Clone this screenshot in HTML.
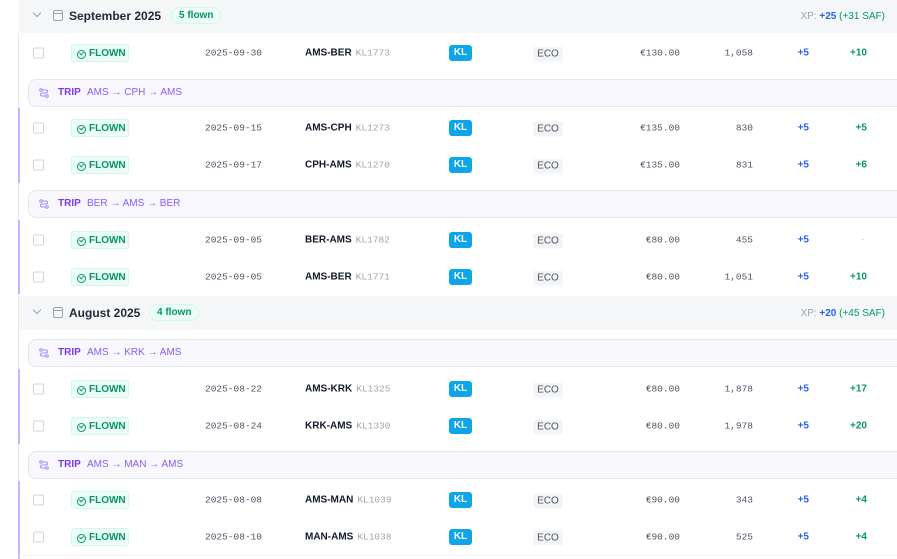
<!DOCTYPE html>
<html><head><meta charset="utf-8"><style>
*{margin:0;padding:0;box-sizing:border-box}
body{width:897px;height:559px;overflow:hidden;background:#fff;font-family:"Liberation Sans",sans-serif;position:relative}
.vl{position:absolute;left:18px;width:1px;background:#e5e7eb}
.pl{position:absolute;left:18px;width:2px;background:#c4b5fd}
.mh{position:absolute;left:19px;right:0;height:34px;background:#f4f6f8}
.mh .chev{position:absolute;left:15px;top:11px;width:6px;height:6px;border-right:1.3px solid #9ca3af;border-bottom:1.3px solid #9ca3af;transform:rotate(45deg)}
.mh .cal{position:absolute;left:34px;top:11px;width:10px;height:11px;border:1.2px solid #9ca3af;border-radius:2px}
.mh .cal:before{content:"";position:absolute;left:0;right:0;top:2px;border-top:1.2px solid #9ca3af}
.mh .t{position:absolute;left:50px;top:10px;font-size:12px;font-weight:bold;color:#1f2937}
.mh .b{position:absolute;top:8px;height:17px;padding:0 7px;border-radius:9px;background:#ecfdf5;border:1px solid #d1fae5;color:#059669;font-size:10px;font-weight:bold;line-height:15px}
.mh .xp{position:absolute;right:12px;top:12px;font-size:10px;color:#9ca3af}
.xp b{color:#2563eb}.xp span{color:#059669}
.tr{position:absolute;left:28px;right:-10px;height:28px;background:#f8f7fd;border:1px solid #e5e7eb;border-radius:8px;font-size:10px;line-height:26px;color:#8b5cf6}
.tr .ic{position:absolute;left:10px;top:8px;width:10px;height:10px}
.tr b{position:absolute;left:29px;color:#7c3aed}
.tr span{position:absolute;left:58px}
.row{position:absolute;left:19px;right:0;height:37px;font-size:10px}
.row>*{position:absolute;top:50%;transform:translateY(-50%)}
.cb{left:14px;width:11px;height:11px;border:1px solid #d1d5db;border-radius:2px;background:#fff}
.fl{left:52px;width:58px;height:18px;background:#ecfdf5;border:1px solid #d1fae5;border-radius:3px;color:#059669;font-weight:bold;font-size:10px;line-height:17px;padding-left:17px}
.fl:before{content:"";position:absolute;left:5px;top:5px;width:7px;height:7px;border:1px solid #059669;border-radius:50%}
.fl:after{content:"";position:absolute;left:8px;top:6px;width:2px;height:3px;border-right:1px solid #059669;border-bottom:1px solid #059669;transform:rotate(45deg)}
.dt{left:186px;font-family:"Liberation Mono",monospace;color:#4b5563;font-size:9.5px}
.rt{left:286px;font-weight:bold;color:#111827}
.rt span{font-weight:normal;color:#9ca3af;font-family:"Liberation Mono",monospace;font-size:9.5px;margin-left:4px}
.kl{left:430px;width:23px;height:16px;background:#0ea5e9;color:#fff;border-radius:3px;font-weight:bold;text-align:center;line-height:16px}
.eco{left:514px;width:30px;height:15px;background:#f3f4f6;color:#4b5563;border-radius:3px;text-align:center;line-height:15px;margin-top:1px}
.pr{right:217px;font-family:"Liberation Mono",monospace;color:#4b5563;font-size:9.5px}
.ds{right:144px;font-family:"Liberation Mono",monospace;color:#4b5563;font-size:9.5px}
.x1{right:88px;color:#2563eb;font-weight:bold}
.x2{right:30px;color:#059669;font-weight:bold}
.sep{position:absolute;left:19px;right:0;border-top:1px solid #f3f4f6}
</style></head><body>
<div class="vl" style="top:33px;height:526px"></div>
<div class="pl" style="top:108px;height:75px"></div>
<div class="pl" style="top:220px;height:74px"></div>
<div class="pl" style="top:369px;height:75px"></div>
<div class="pl" style="top:481px;height:78px"></div>

<div class="mh" style="top:-1px"><i class="chev"></i><i class="cal"></i><span class="t">September 2025</span><span class="b" style="left:152px">5 flown</span><span class="xp">XP: <b>+25</b> <span>(+31 SAF)</span></span></div>

<div class="row" style="top:34px"><i class="cb"></i><span class="fl">FLOWN</span><span class="dt">2025-09-30</span><span class="rt">AMS-BER<span>KL1773</span></span><span class="kl">KL</span><span class="eco">ECO</span><span class="pr">€130.00</span><span class="ds">1,058</span><span class="x1">+5</span><span class="x2">+10</span></div>

<div class="tr" style="top:79px"><svg class="ic" viewBox="0 0 10 10" fill="none" stroke="#a78bfa" stroke-width="1"><circle cx="2" cy="2" r="1.3"/><circle cx="8" cy="8" r="1.3"/><path d="M3.5 2H7a1.5 1.5 0 010 3H3a1.5 1.5 0 000 3h3.5"/></svg><b>TRIP</b><span>AMS → CPH → AMS</span></div>
<div class="row" style="top:109px"><i class="cb"></i><span class="fl">FLOWN</span><span class="dt">2025-09-15</span><span class="rt">AMS-CPH<span>KL1273</span></span><span class="kl">KL</span><span class="eco">ECO</span><span class="pr">€135.00</span><span class="ds">830</span><span class="x1">+5</span><span class="x2">+5</span></div>
<div class="row" style="top:146px"><i class="cb"></i><span class="fl">FLOWN</span><span class="dt">2025-09-17</span><span class="rt">CPH-AMS<span>KL1270</span></span><span class="kl">KL</span><span class="eco">ECO</span><span class="pr">€135.00</span><span class="ds">831</span><span class="x1">+5</span><span class="x2">+6</span></div>

<div class="tr" style="top:190px"><svg class="ic" viewBox="0 0 10 10" fill="none" stroke="#a78bfa" stroke-width="1"><circle cx="2" cy="2" r="1.3"/><circle cx="8" cy="8" r="1.3"/><path d="M3.5 2H7a1.5 1.5 0 010 3H3a1.5 1.5 0 000 3h3.5"/></svg><b>TRIP</b><span>BER → AMS → BER</span></div>
<div class="row" style="top:221px"><i class="cb"></i><span class="fl">FLOWN</span><span class="dt">2025-09-05</span><span class="rt">BER-AMS<span>KL1782</span></span><span class="kl">KL</span><span class="eco">ECO</span><span class="pr">€80.00</span><span class="ds">455</span><span class="x1">+5</span><span class="x2" style="color:#d1d5db;font-weight:normal;right:32px">-</span></div>
<div class="row" style="top:258px"><i class="cb"></i><span class="fl">FLOWN</span><span class="dt">2025-09-05</span><span class="rt">AMS-BER<span>KL1771</span></span><span class="kl">KL</span><span class="eco">ECO</span><span class="pr">€80.00</span><span class="ds">1,051</span><span class="x1">+5</span><span class="x2">+10</span></div>

<div class="mh" style="top:296px"><i class="chev"></i><i class="cal"></i><span class="t">August 2025</span><span class="b" style="left:130px">4 flown</span><span class="xp">XP: <b>+20</b> <span>(+45 SAF)</span></span></div>

<div class="tr" style="top:339px"><svg class="ic" viewBox="0 0 10 10" fill="none" stroke="#a78bfa" stroke-width="1"><circle cx="2" cy="2" r="1.3"/><circle cx="8" cy="8" r="1.3"/><path d="M3.5 2H7a1.5 1.5 0 010 3H3a1.5 1.5 0 000 3h3.5"/></svg><b>TRIP</b><span>AMS → KRK → AMS</span></div>
<div class="row" style="top:370px"><i class="cb"></i><span class="fl">FLOWN</span><span class="dt">2025-08-22</span><span class="rt">AMS-KRK<span>KL1325</span></span><span class="kl">KL</span><span class="eco">ECO</span><span class="pr">€80.00</span><span class="ds">1,878</span><span class="x1">+5</span><span class="x2">+17</span></div>
<div class="row" style="top:407px"><i class="cb"></i><span class="fl">FLOWN</span><span class="dt">2025-08-24</span><span class="rt">KRK-AMS<span>KL1330</span></span><span class="kl">KL</span><span class="eco">ECO</span><span class="pr">€80.00</span><span class="ds">1,978</span><span class="x1">+5</span><span class="x2">+20</span></div>

<div class="tr" style="top:451px"><svg class="ic" viewBox="0 0 10 10" fill="none" stroke="#a78bfa" stroke-width="1"><circle cx="2" cy="2" r="1.3"/><circle cx="8" cy="8" r="1.3"/><path d="M3.5 2H7a1.5 1.5 0 010 3H3a1.5 1.5 0 000 3h3.5"/></svg><b>TRIP</b><span>AMS → MAN → AMS</span></div>
<div class="row" style="top:481px"><i class="cb"></i><span class="fl">FLOWN</span><span class="dt">2025-08-08</span><span class="rt">AMS-MAN<span>KL1039</span></span><span class="kl">KL</span><span class="eco">ECO</span><span class="pr">€90.00</span><span class="ds">343</span><span class="x1">+5</span><span class="x2">+4</span></div>
<div class="row" style="top:518px"><i class="cb"></i><span class="fl">FLOWN</span><span class="dt">2025-08-10</span><span class="rt">MAN-AMS<span>KL1038</span></span><span class="kl">KL</span><span class="eco">ECO</span><span class="pr">€90.00</span><span class="ds">525</span><span class="x1">+5</span><span class="x2">+4</span></div>
<div class="sep" style="top:555px"></div>
</body></html>
